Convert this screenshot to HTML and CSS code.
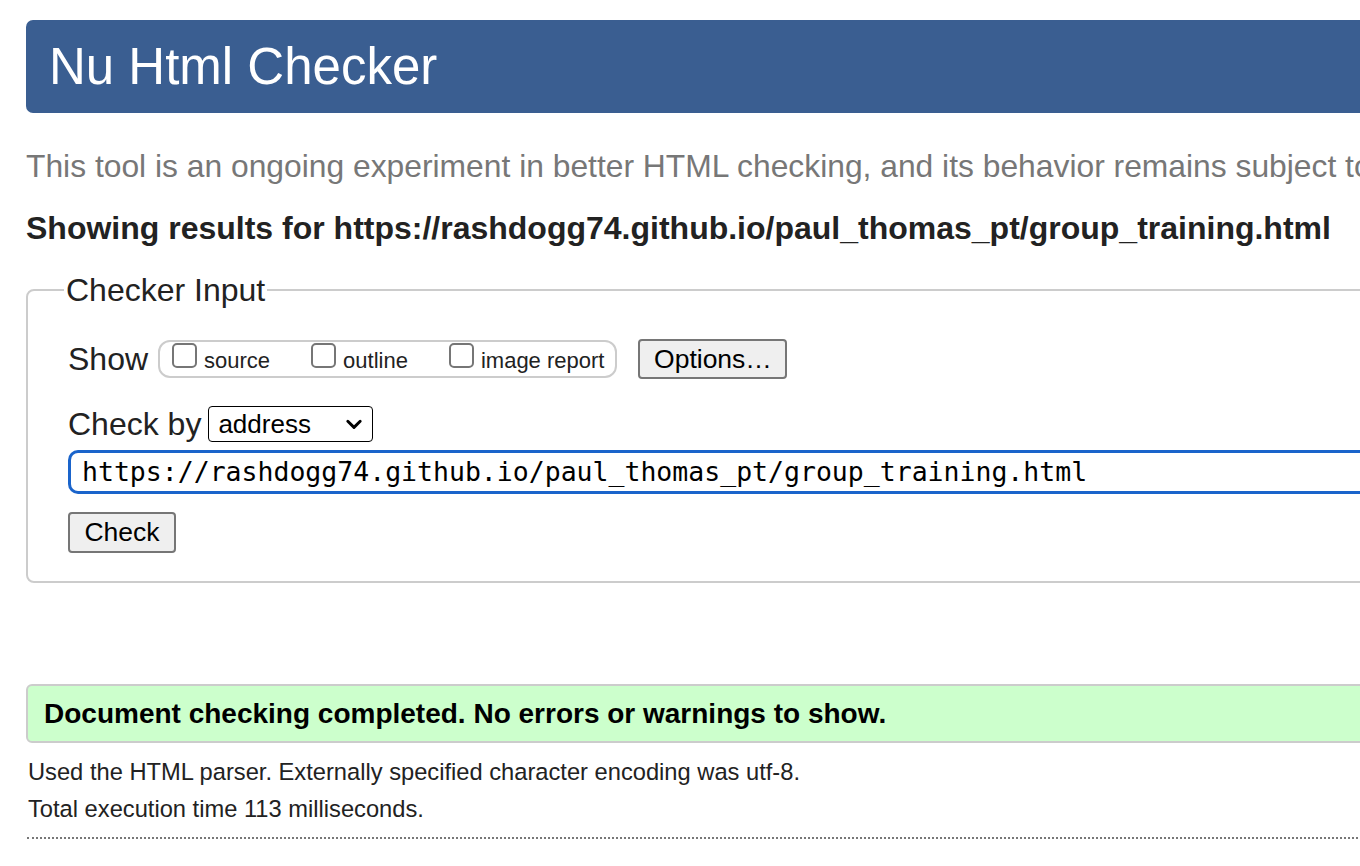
FILE: index.html
```html
<!DOCTYPE html>
<html lang="en">
<head>
<meta charset="utf-8">
<title>Nu Html Checker</title>
<link rel="stylesheet" href="styles.css">
</head>
<body>
<div class="page">
  <h1 class="banner">Nu Html Checker</h1>
  <p class="intro">This tool is an ongoing experiment in better HTML checking, and its behavior remains subject to change</p>
  <p class="showing">Showing results for https://rashdogg74.github.io/paul_thomas_pt/group_training.html</p>
  <fieldset class="input-box">
    <legend class="input-legend">Checker Input</legend>
    <div class="row show-row">
      <span class="row-label">Show</span>
      <div class="show-group">
        <label class="opt"><span class="cb"></span>source</label>
        <label class="opt"><span class="cb"></span>outline</label>
        <label class="opt"><span class="cb"></span>image report</label>
      </div>
      <span class="btn options-btn">Options…</span>
    </div>
    <div class="row by-row">
      <span class="row-label">Check by</span>
      <span class="select">address<svg class="chev" viewBox="0 0 16 16" width="16" height="16"><path d="M2.5 5.5 L8 11 L13.5 5.5" fill="none" stroke="#000" stroke-width="2.6" stroke-linecap="round" stroke-linejoin="round"/></svg></span>
    </div>
    <div class="url">https://rashdogg74.github.io/paul_thomas_pt/group_training.html</div>
    <div class="row"><span class="btn check-btn">Check</span></div>
  </fieldset>
  <div class="success">Document checking completed. No errors or warnings to show.</div>
  <p class="meta">Used the HTML parser. Externally specified character encoding was utf-8.</p>
  <p class="meta meta2">Total execution time 113 milliseconds.</p>
  <hr class="dots">
</div>
</body>
</html>
```

FILE: styles.css
```css
html {
  overflow: hidden;
  background: #fff;
}
body {
  margin: 0;
  font-family: "Liberation Sans", Arial, Helvetica, sans-serif;
  color: #222;
}
.page {
  width: 1600px;
  padding: 20px 0 0 26px;
}
.banner {
  margin: 0;
  height: 93px;
  line-height: 93px;
  padding-left: 23px;
  background: #3a5e91;
  color: #fff;
  font-size: 51px;
  font-weight: normal;
  border-radius: 7px;
}
.intro {
  margin: 35px 0 0 0;
  font-size: 31.8px;
  line-height: 36px;
  color: #777;
  white-space: nowrap;
}
.showing {
  margin: 26px 0 0 0;
  font-size: 32px;
  line-height: 36px;
  font-weight: bold;
  color: #222;
  white-space: nowrap;
}
.input-box {
  margin: 26px 0 0 0;
  border: 2px solid #ccc;
  border-radius: 8px;
  padding: 31px 0 28px 40px;
}
.input-legend {
  font-size: 32px;
  line-height: 36px;
  padding: 0 2px;
  margin-left: -4px;
  color: #222;
}
.row {
  display: flex;
  align-items: center;
}
.row-label {
  font-size: 32px;
  line-height: 36px;
  color: #222;
}
.show-row {
  height: 40px;
}
.show-group {
  margin-left: 10px;
  height: 34px;
  border: 2px solid #ccc;
  border-radius: 12px;
  display: flex;
  align-items: center;
  padding: 0 11px 0 12px;
}
.opt {
  display: flex;
  align-items: center;
  font-size: 22px;
  color: #222;
  margin-right: 41px;
  position: relative;
  top: 2px;
}
.opt:last-child {
  margin-right: 0;
}
.cb {
  box-sizing: border-box;
  width: 25px;
  height: 25px;
  border: 2px solid #767676;
  border-radius: 5px;
  margin-right: 7px;
  position: relative;
  top: -6px;
  background: #fff;
}
.btn {
  display: inline-block;
  box-sizing: border-box;
  background: #efefef;
  border: 2px solid #767676;
  border-radius: 4px;
  font-size: 26.5px;
  color: #000;
  text-align: center;
}
.options-btn {
  margin-left: 21px;
  width: 149px;
  height: 40px;
  line-height: 36px;
}
.by-row {
  margin-top: 27px;
}
.select {
  margin-left: 7px;
  box-sizing: border-box;
  width: 165px;
  height: 36px;
  border: 1.5px solid #000;
  border-radius: 4px;
  font-size: 26px;
  line-height: 32px;
  padding-left: 9px;
  color: #000;
  display: flex;
  align-items: center;
  justify-content: space-between;
  padding-right: 9px;
}
.chev {
  width: 18px;
  height: 18px;
}
.url {
  margin-top: 8px;
  box-sizing: border-box;
  height: 44px;
  border: 3px solid #1a64cb;
  border-right: none;
  border-radius: 10px 0 0 10px;
  font-family: "DejaVu Sans Mono", "Liberation Mono", monospace;
  font-size: 26.5px;
  line-height: 38px;
  padding-left: 11px;
  color: #000;
  white-space: nowrap;
}
.check-btn {
  margin-top: 18px;
  width: 108px;
  height: 41px;
  line-height: 37px;
}
.success {
  margin-top: 101px;
  box-sizing: border-box;
  height: 59px;
  line-height: 55px;
  background: #ccffcc;
  border: 2px solid #ccc;
  border-radius: 6px;
  padding-left: 16px;
  font-size: 28px;
  font-weight: bold;
  color: #000;
  white-space: nowrap;
}
.meta {
  margin: 15px 0 0 2px;
  font-size: 23.7px;
  line-height: 28px;
  color: #222;
  white-space: nowrap;
}
.meta2 {
  margin-top: 9px;
}
.dots {
  margin: 14px 0 0 1px;
  border: none;
  border-top: 2px dotted #777;
  height: 0;
}
```
